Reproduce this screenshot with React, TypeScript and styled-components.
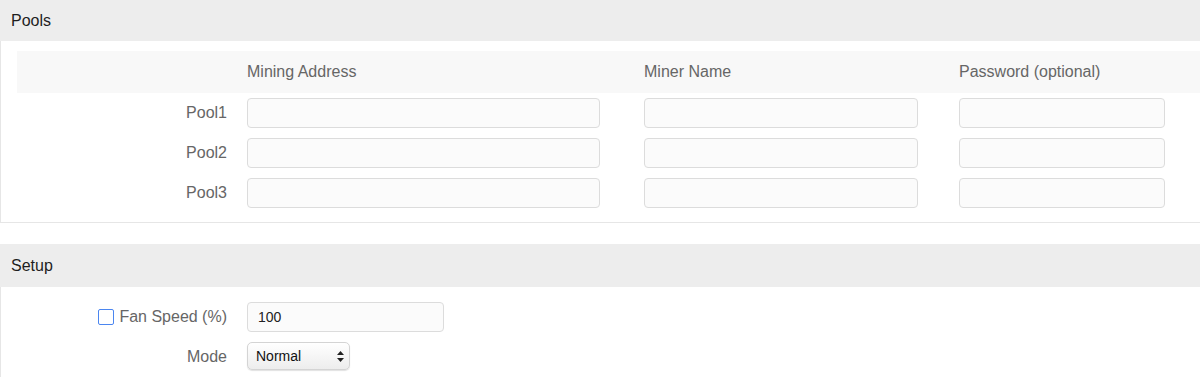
import * as React from 'react';
import styled, { createGlobalStyle } from 'styled-components';

const GlobalStyle = createGlobalStyle`
	html, body {
		margin: 0;
		padding: 0;
		background: #fff;
		font-family: "Liberation Sans", Arial, sans-serif;
		color: #333;
	}
`;

const Page = styled.div`
	width: 1200px;
	display: flex;
	flex-direction: column;
`;

const Panel = styled.section<{ $gap?: number }>`
	margin-top: ${p => p.$gap || 0}px;
`;

const PanelHeader = styled.div<{ $height: number }>`
	height: ${p => p.$height}px;
	background: #ededed;
	display: flex;
	align-items: center;
	padding-left: 11px;
	font-size: 16px;
	color: #1e1e1e;
`;

const PanelBody = styled.div`
	border-left: 1px solid #e6e6e6;
	border-bottom: 1px solid #e6e6e6;
	padding: 10px 0 9px 16px;
`;

const SetupBody = styled.div`
	border-left: 1px solid #e6e6e6;
	padding: 10px 0 0 16px;
`;

const PoolGrid = styled.div`
	display: grid;
	grid-template-columns: 230px 397px 315px 1fr;
	grid-template-rows: 42px;
	grid-auto-rows: 40px;
`;

const HeadCell = styled.div`
	background: #f8f8f8;
	display: flex;
	align-items: center;
	font-size: 16px;
	color: #666;
`;

const LabelCell = styled.div`
	display: flex;
	align-items: center;
	justify-content: flex-end;
	gap: 5px;
	padding: 5px 20px 5px 0;
	height: 30px;
	font-size: 16px;
	color: #666;
`;

const FieldCell = styled.div`
	padding-top: 5px;
`;

const TextInput = styled.input<{ $width: number }>`
	box-sizing: border-box;
	width: ${p => p.$width}px;
	height: 30px;
	border: 1px solid #dcdcdc;
	border-radius: 4px;
	background: #fbfbfb;
	padding: 0 10px;
	font-family: "Liberation Sans", Arial, sans-serif;
	font-size: 14px;
	color: #222;
	outline: none;
`;

const FormRow = styled.div`
	display: grid;
	grid-template-columns: 230px 1fr;
	height: 40px;
`;

const Check = styled.span`
	box-sizing: border-box;
	width: 16px;
	height: 16px;
	border: 1px solid #4b86f0;
	border-radius: 2px;
	background: #fff;
`;

const SelectWrap = styled.div`
	position: relative;
	width: 103px;
	height: 28px;
`;

const Select = styled.select`
	appearance: none;
	-webkit-appearance: none;
	box-sizing: border-box;
	width: 100%;
	height: 100%;
	border: 1px solid #d4d4d4;
	border-radius: 5px;
	background: linear-gradient(#ffffff, #ededed);
	box-shadow: 0 1px 1px rgba(0, 0, 0, 0.12);
	padding: 0 0 0 8px;
	font-family: "Liberation Sans", Arial, sans-serif;
	font-size: 14px;
	color: #111;
	outline: none;
`;

const Arrows = styled.svg`
	position: absolute;
	right: 6px;
	top: 9px;
	pointer-events: none;
`;

const columns = [
	{ title: 'Mining Address', width: 353 },
	{ title: 'Miner Name', width: 274 },
	{ title: 'Password (optional)', width: 206 },
];

const pools = ['Pool1', 'Pool2', 'Pool3'];

export default function App() {
	return (
		<Page>
			<GlobalStyle />
			<Panel>
				<PanelHeader $height={41}>Pools</PanelHeader>
				<PanelBody>
					<PoolGrid>
						<HeadCell />
						{columns.map(col => <HeadCell key={col.title}>{col.title}</HeadCell>)}
						{pools.map(pool => (
							<React.Fragment key={pool}>
								<LabelCell>{pool}</LabelCell>
								{columns.map(col => (
									<FieldCell key={col.title}>
										<TextInput $width={col.width} />
									</FieldCell>
								))}
							</React.Fragment>
						))}
					</PoolGrid>
				</PanelBody>
			</Panel>
			<Panel $gap={21}>
				<PanelHeader $height={43}>Setup</PanelHeader>
				<SetupBody>
					<FormRow>
						<LabelCell><Check />Fan Speed (%)</LabelCell>
						<FieldCell><TextInput $width={197} defaultValue="100" /></FieldCell>
					</FormRow>
					<FormRow>
						<LabelCell>Mode</LabelCell>
						<FieldCell>
							<SelectWrap>
								<Select defaultValue="normal">
									<option value="normal">Normal</option>
								</Select>
								<Arrows width="7" height="11" viewBox="0 0 7 11">
									<path d="M3.5 0 L7 4 L0 4 Z M0 7 L7 7 L3.5 11 Z" fill="#222" />
								</Arrows>
							</SelectWrap>
						</FieldCell>
					</FormRow>
				</SetupBody>
			</Panel>
		</Page>
	);
}
